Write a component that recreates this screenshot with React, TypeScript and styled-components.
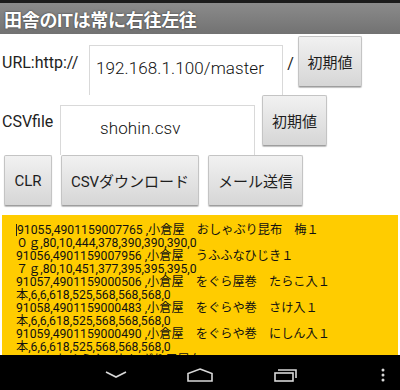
import React from 'react'
import styled, { createGlobalStyle } from 'styled-components'

const GlobalStyle = createGlobalStyle`
  html, body {
    margin: 0;
    padding: 0;
    background: #ffffff;
  }
  body {
    font-family: Roboto, "Noto Sans CJK JP", sans-serif;
  }
`

const Screen = styled.div`
  width: 400px;
  height: 390px;
  display: flex;
  flex-direction: column;
  overflow: hidden;
  background: #ffffff;
`
const StatusStrip = styled.div`
  height: 3px;
  background: #1c1c1c;
`
const TitleBar = styled.div`
  height: 31px;
  display: flex;
  align-items: center;
  padding-left: 4px;
  background: linear-gradient(#8b8b8b, #727272);
  color: #ffffff;
  font-size: 18px;
  font-weight: bold;
  letter-spacing: -0.3px;
  text-shadow: 0 0 2px #333333;
`
const Row = styled.div<{ $top: number }>`
  display: flex;
  align-items: flex-start;
  margin-top: ${(p) => p.$top}px;
`
const Label = styled.div<{ $top: number; $width: number }>`
  width: ${(p) => p.$width}px;
  padding-left: 2px;
  margin-top: ${(p) => p.$top}px;
  font-size: 16px;
  color: #222222;
  line-height: 18px;
`
const Field = styled.div<{ $top: number; $width: number; $pad: number }>`
  box-sizing: border-box;
  width: ${(p) => p.$width}px;
  height: 50px;
  margin-top: ${(p) => p.$top}px;
  padding-left: ${(p) => p.$pad}px;
  padding-top: 12px;
  border: 1px solid #d9d9d9;
  border-bottom: 0;
  background: #ffffff;
  font-size: 17px;
  color: #111111;
  letter-spacing: 0.1px;
  font-weight: 300;
`
const Slash = styled.div`
  width: 15px;
  margin-top: 18px;
  text-align: center;
  font-size: 16px;
  color: #222222;
`
const Button = styled.button<{ $width: number; $left?: number }>`
  box-sizing: border-box;
  width: ${(p) => p.$width}px;
  height: 51px;
  margin-left: ${(p) => p.$left ?? 0}px;
  padding: 0;
  border: 1px solid #c4c4c4;
  border-bottom-color: #9e9e9e;
  border-radius: 2px;
  background: linear-gradient(#f1f1f1, #d6d6d6);
  box-shadow: 0 1px 1px rgba(0, 0, 0, 0.25);
  font-family: Roboto, "Noto Sans CJK JP", sans-serif;
  font-size: 15px;
  color: #1e1e1e;
`
const ButtonRow = styled.div`
  display: flex;
  gap: 9px;
  padding-left: 4px;
`
const Output = styled.div`
  flex: 1;
  margin: 9px 2px 0;
  padding: 9px 0 0 14px;
  background: #ffcc00;
  overflow: hidden;
  font-size: 12.2px;
  line-height: 13px;
  color: #111111;
`
const Line = styled.div`
  white-space: nowrap;
  height: 13px;
`
const Caret = styled.span`
  display: inline-block;
  width: 0;
  height: 12px;
  border-left: 1px solid #222222;
  vertical-align: -2px;
`
const NavBar = styled.div`
  height: 35px;
  flex-shrink: 0;
  background: #000000;
  position: relative;
`
const NavIcon = styled.svg<{ $x: number }>`
  position: absolute;
  left: ${(p) => p.$x}px;
  top: 13px;
`

const lines = [
  '91055,4901159007765 ,小倉屋　おしゃぶり昆布　梅１',
  '０ｇ,80,10,444,378,390,390,390,0',
  '91056,4901159007956 ,小倉屋　うふふなひじき１',
  '７ｇ,80,10,451,377,395,395,395,0',
  '91057,4901159000506 ,小倉屋　をぐら屋巻　たらこ入１',
  '本,6,6,618,525,568,568,568,0',
  '91058,4901159000483 ,小倉屋　をぐらや巻　さけ入１',
  '本,6,6,618,525,568,568,568,0',
  '91059,4901159000490 ,小倉屋　をぐらや巻　にしん入１',
  '本,6,6,618,525,568,568,568,0',
  '91060 ,おぐらや　おにぎり用昆布２２ｇ　,80,80,421,410,445,445,445,0',
]

const App: React.FC = () => {
  return (
    <>
      <GlobalStyle />
      <Screen>
        <StatusStrip />
        <TitleBar>田舎のITは常に右往左往</TitleBar>
        <Row $top={2}>
          <Label $top={18} $width={87}>URL:http://</Label>
          <Field $top={9} $width={194} $pad={6}>192.168.1.100/master</Field>
          <Slash>/</Slash>
          <Button $width={64}>初期値</Button>
        </Row>
        <Row $top={0}>
          <Label $top={18} $width={58}>CSVfile</Label>
          <Field $top={10} $width={195} $pad={39}>shohin.csv</Field>
          <Button $width={65} $left={7}>初期値</Button>
        </Row>
        <ButtonRow>
          <Button $width={48}>CLR</Button>
          <Button $width={138}>CSVダウンロード</Button>
          <Button $width={95}>メール送信</Button>
        </ButtonRow>
        <Output>
          {lines.map((line, i) => (
            <Line key={`line-${i}`}>
              {i === 0 && <Caret />}
              {line}
            </Line>
          ))}
        </Output>
        <NavBar>
          <NavIcon $x={105} width='22' height='10' viewBox='0 0 22 10'>
            <polyline points='1,4 11,9 21,4' fill='none' stroke='#d8d8d8' strokeWidth='1.6' />
          </NavIcon>
          <NavIcon $x={187} width='26' height='14' viewBox='0 0 26 14'>
            <polygon points='13,1 25,5.5 25,13 1,13 1,5.5' fill='none' stroke='#d8d8d8' strokeWidth='1.6' />
          </NavIcon>
          <NavIcon $x={274} width='24' height='14' viewBox='0 0 24 14'>
            <rect x='1' y='5' width='18' height='8' fill='none' stroke='#d8d8d8' strokeWidth='1.6' />
            <polyline points='4,2 22,2 22,10' fill='none' stroke='#d8d8d8' strokeWidth='1.6' />
          </NavIcon>
          <NavIcon $x={381} width='4' height='14' viewBox='0 0 4 14'>
            <circle cx='2' cy='2' r='1.5' fill='#d8d8d8' />
            <circle cx='2' cy='7' r='1.5' fill='#d8d8d8' />
            <circle cx='2' cy='12' r='1.5' fill='#d8d8d8' />
          </NavIcon>
        </NavBar>
      </Screen>
    </>
  )
}

export default App
